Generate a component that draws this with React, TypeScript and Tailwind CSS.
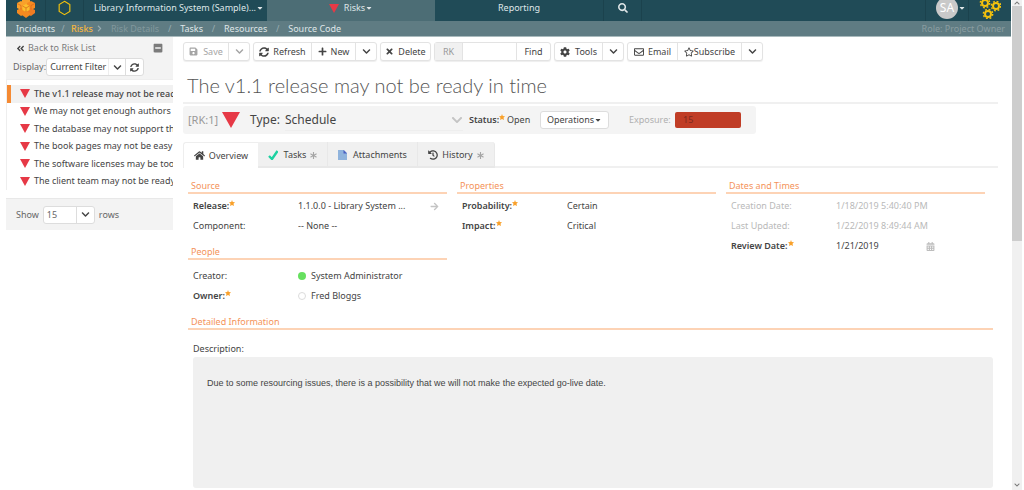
import type { ReactNode } from "react";
import {
  FaAngleDoubleLeft,
  FaArrowRight,
  FaAsterisk,
  FaCalendarAlt,
  FaCaretDown,
  FaChevronDown,
  FaCog,
  FaHistory,
  FaHome,
  FaMinusSquare,
  FaPlus,
  FaRegEnvelope,
  FaRegStar,
  FaSave,
  FaSearch,
  FaSyncAlt,
  FaTimes,
} from "react-icons/fa";

const risks = [
  "The v1.1 release may not be ready",
  "We may not get enough authors",
  "The database may not support the",
  "The book pages may not be easy",
  "The software licenses may be too",
  "The client team may not be ready",
];

function Triangle({ className }: { className: string }) {
  return (
    <svg viewBox="0 0 18 16" className={className} aria-hidden="true">
      <path d="M0 0h18L9 16z" fill="#e63946" />
    </svg>
  );
}

function LogoMark() {
  return (
    <svg viewBox="0 0 20 20" className="h-5 w-5" aria-hidden="true">
      <path d="M10 0l4 2v4l-4 2-4-2V2z" fill="#f9a12b" />
      <path d="M5 3l4 2v5l-4 2-4-2V5z" fill="#f9a12b" />
      <path d="M15 3l4 2v5l-4 2-4-2V5z" fill="#f58a20" />
      <path d="M5 10l4 2v4l-4 2-4-3v-3z" fill="#f58a20" />
      <path d="M15 10l4 2v3l-4 3-4-2v-4z" fill="#f07c22" />
      <path d="M10 13l4 2v2l-4 3-4-3v-2z" fill="#f58a20" />
      <path d="M10 6l3.500 2v4L10 14l-3.500-2V8z" fill="#fbc02d" />
      <path d="M10 10v4M10 10L6.500 8M10 10l3.500-2M5 7.500v4M5 7.500L1 5.500M15 7.500v4M15 7.500l4-2" stroke="#d9641c" strokeWidth="0.700" fill="none" />
    </svg>
  );
}

function GearCluster() {
  return (
    <svg viewBox="0 0 22 22" className="h-[22px] w-[22px]" fill="none" stroke="#f4c20d" aria-hidden="true">
      <g strokeWidth="2">
        <circle cx="6" cy="6" r="3" />
        <circle cx="17" cy="9" r="3" />
        <circle cx="9" cy="17" r="3" />
      </g>
      <g strokeWidth="1.400" strokeDasharray="1.850 1.850">
        <circle cx="6" cy="6" r="4.700" />
        <circle cx="17" cy="9" r="4.700" />
        <circle cx="9" cy="17" r="4.700" />
      </g>
    </svg>
  );
}

function Star() {
  return (
    <svg viewBox="0 0 24 24" className="mb-1 h-[6px] w-[6px] shrink-0 self-start" aria-label="required">
      <path d="M12 0l3 8 9 1-6 6 2 9-8-4-8 4 2-9-6-6 9-1z" fill="#f9a12b" />
    </svg>
  );
}

function ButtonGroup({ children }: { children: ReactNode }) {
  return (
    <div className="flex h-[19px] shrink-0 divide-x divide-[#e3e3e3] rounded-[3px] border border-[#e3e3e3] bg-white shadow-[0_1px_1px_#eeeeee]">
      {children}
    </div>
  );
}

const chevronButton = "flex w-5 items-center justify-center";

function SectionTitle({ children }: { children: ReactNode }) {
  return (
    <h2 className="h-[15px] border-b-2 border-[#fdd3b5] pl-[3px] text-[9px] leading-[14px] text-[#f4935a]">{children}</h2>
  );
}

function FieldRow({ id, label, required, muted, children }: { id: string; label: string; required?: boolean; muted?: boolean; children: ReactNode }) {
  return (
    <div className={muted ? "flex h-5 items-center pl-[5px] text-[#b9b9b9]" : "flex h-5 items-center pl-[5px]"}>
      <label htmlFor={id} className={required ? "flex w-[105px] shrink-0 items-center font-semibold" : "w-[105px] shrink-0"}>
        {label}:{required && <Star />}
      </label>
      {children}
    </div>
  );
}

const bare = "min-w-0 flex-1 appearance-none bg-transparent p-0 outline-none";

export default function App() {
  return (
    <div className="flex h-screen overflow-hidden bg-white pl-[6px] pr-[2px] font-['Noto_Sans',sans-serif] text-[9px] leading-3 text-[#444444]">
      <div className="flex min-w-0 flex-1 flex-col">
        <header className="shrink-0 text-[#dfe6e8]">
          <div className="flex h-[21px] bg-[#204b57]">
            <a href="#home" aria-label="Home" className="flex w-10 items-center justify-center border-r border-[#1b424d] pb-[5px]">
              <LogoMark />
            </a>
            <a href="#workspace" aria-label="Workspace" className="flex w-[38px] items-center justify-center border-r border-[#1b424d] pb-[5px]">
              <svg viewBox="0 0 16 18" className="h-4 w-[15px]" aria-hidden="true">
                <path d="M8 1.500l6 3.700v7.600l-6 3.700-6-3.700V5.200z" fill="none" stroke="#f4c20d" strokeWidth="1.300" />
              </svg>
            </a>
            <button className="flex w-[183px] items-center justify-between whitespace-nowrap pb-[5px] pl-[10px] pr-1">
              Library Information System (Sample)... <FaCaretDown className="h-2 w-2 shrink-0" />
            </button>
            <button className="flex w-[168px] items-center justify-center gap-[5px] bg-[#4c6d75] pb-[5px]">
              <Triangle className="h-[9px] w-[10px]" />
              <span className="flex items-center">
                Risks <FaCaretDown className="h-2 w-2" />
              </span>
            </button>
            <a href="#reporting" className="flex w-[168px] items-center justify-center pb-[5px]">
              Reporting
            </a>
            <button aria-label="Search" className="flex w-[39px] items-center justify-center border-x border-[#1b424d] pb-[5px]">
              <FaSearch className="h-[10px] w-[10px]" />
            </button>
            <div className="flex-1" />
            <button aria-label="Account" className="flex w-[44px] items-center justify-start border-x border-[#1b424d] pb-[5px] pl-[10px]">
              <span className="flex h-[22px] w-[22px] shrink-0 items-center justify-center rounded-full bg-[#c9c9c9] text-[12px] text-white">SA</span>
              <FaCaretDown className="h-2 w-2 shrink-0" />
            </button>
            <a href="#admin" aria-label="Administration" className="flex w-[42px] items-center justify-center pb-[5px]">
              <GearCluster />
            </a>
          </div>
          <nav className="flex h-4 items-center whitespace-nowrap border-b border-[#a9babd] bg-[#5f7c83] px-[10px]">
            <a href="#incidents">Incidents</a>
            <span className="w-4 text-center text-[#9aadb1]">/</span>
            <a href="#risks" className="font-medium text-[#f4b63f]">Risks</a>
            <FaChevronDown className="ml-[3px] h-[7px] w-[7px] -rotate-90 text-[#9aadb1]" />
            <span className="ml-2 text-[#82989d]">Risk Details</span>
            <span className="w-[21px] text-center text-[#9aadb1]">/</span>
            <a href="#tasks">Tasks</a>
            <span className="w-[21px] text-center text-[#9aadb1]">/</span>
            <a href="#resources">Resources</a>
            <span className="w-[21px] text-center text-[#9aadb1]">/</span>
            <a href="#source">Source Code</a>
            <span className="ml-auto -mr-1 text-[#8a9da1]">Role: Project Owner</span>
          </nav>
        </header>

        <div className="flex min-h-0 flex-1">
          <aside className="w-[167px] shrink-0">
            <div className="h-[42px] bg-[#f3f3f3]">
              <div className="flex h-5 items-center px-[10px] pt-[2px] text-[#7b7b7b]">
                <a href="#list" className="flex items-center gap-[3px]">
                  <FaAngleDoubleLeft className="h-[9px] w-[9px] text-[#444444]" />
                  Back to Risk List
                </a>
                <button aria-label="Collapse" className="ml-auto">
                  <FaMinusSquare className="h-[10px] w-[10px]" />
                </button>
              </div>
              <div className="flex h-5 items-center pl-[7px]">
                <label htmlFor="filter" className="text-[#666666]">Display:</label>
                <div className="flex h-[18px] rounded-[3px] border border-[#dddddd] bg-white">
                  <div className="relative flex">
                    <select id="filter" className="w-[78px] appearance-none bg-transparent pl-[3px] outline-none">
                      <option>Current Filter</option>
                    </select>
                    <span className="pointer-events-none absolute inset-y-0 right-0 flex w-[17px] items-center justify-center border-l border-[#eeeeee]">
                      <FaChevronDown className="h-[9px] w-[9px]" />
                    </span>
                  </div>
                  <button aria-label="Reload list" className="flex w-[18px] items-center justify-center border-l border-[#dddddd]">
                    <FaSyncAlt className="h-[9px] w-[9px]" />
                  </button>
                </div>
              </div>
            </div>
            <div className="border-l border-t border-[#eeeeee] pt-[5px]">
              <ul className="grid h-[105px] auto-rows-fr">
                {risks.map((risk, i) => (
                  <li key={risk} className={i === 0 ? "flex min-w-0 border-l-4 border-[#f58a33] bg-[#f1f1f1] font-medium" : "flex min-w-0 border-l-4 border-transparent"}>
                    <a href="#risk" className="flex min-w-0 flex-1 items-center gap-1 overflow-hidden whitespace-nowrap pl-[9px]">
                      <Triangle className="h-[9px] w-[10px] shrink-0" />
                      {risk}
                    </a>
                  </li>
                ))}
              </ul>
            </div>
            <div className="mt-2 flex h-8 items-center gap-1 border-t border-[#e8e8e8] bg-[#f3f3f3] pl-[10px] text-[#666666]">
              <label htmlFor="rows">Show</label>
              <div className="relative flex h-[18px] rounded-[3px] border border-[#dddddd] bg-white">
                <select id="rows" className="w-[50px] appearance-none bg-transparent pl-[3px] outline-none">
                  <option>15</option>
                </select>
                <span className="pointer-events-none absolute inset-y-0 right-0 flex w-[18px] items-center justify-center border-l border-[#dddddd] text-[#444444]">
                  <FaChevronDown className="h-[9px] w-[9px]" />
                </span>
              </div>
              rows
            </div>
          </aside>

          <main className="min-w-0 flex-1 pl-[10px] pr-[13px] pt-[5px]">
            <div className="flex gap-[3px]" role="toolbar">
              <ButtonGroup>
                <button className="flex w-[45px] items-center justify-center gap-[5px] text-[#a5a5a5]">
                  <FaSave className="h-[9px] w-[9px]" />
                  Save
                </button>
                <button aria-label="Save options" className={chevronButton}>
                  <FaChevronDown className="h-[9px] w-[9px] text-[#a5a5a5]" />
                </button>
              </ButtonGroup>
              <ButtonGroup>
                <button className="flex w-[58px] items-center justify-center gap-1">
                  <FaSyncAlt className="h-[10px] w-[10px]" />
                  Refresh
                </button>
                <button className="flex w-[44px] items-center justify-center gap-1">
                  <FaPlus className="h-[9px] w-[9px]" />
                  New
                </button>
                <button aria-label="New options" className={chevronButton}>
                  <FaChevronDown className="h-[9px] w-[9px]" />
                </button>
              </ButtonGroup>
              <ButtonGroup>
                <button className="flex w-[49px] items-center justify-center gap-1">
                  <FaTimes className="h-[9px] w-[9px]" />
                  Delete
                </button>
              </ButtonGroup>
              <ButtonGroup>
                <label htmlFor="find" className="flex w-7 items-center justify-center bg-[#f1f1f1] text-[#999999]">RK</label>
                <input id="find" className="w-[54px] bg-transparent px-1 outline-none" />
                <button className="w-[33px]">Find</button>
              </ButtonGroup>
              <ButtonGroup>
                <button className="flex w-[48px] items-center justify-center gap-[5px]">
                  <FaCog className="h-[10px] w-[10px]" />
                  Tools
                </button>
                <button aria-label="Tool options" className={chevronButton}>
                  <FaChevronDown className="h-[9px] w-[9px]" />
                </button>
              </ButtonGroup>
              <ButtonGroup>
                <button className="flex w-[50px] items-center justify-center gap-1">
                  <FaRegEnvelope className="h-[10px] w-[10px]" />
                  Email
                </button>
                <button className="flex w-[64px] items-center justify-center">
                  <FaRegStar className="h-[10px] w-[10px]" />
                  Subscribe
                </button>
                <button aria-label="Subscription options" className={chevronButton}>
                  <FaChevronDown className="h-[9px] w-[9px]" />
                </button>
              </ButtonGroup>
            </div>

            <h1 className="mt-3 h-[31px] border-b-2 border-[#f0f0f0] pl-1 font-['Lato',sans-serif] text-[20px] font-light leading-6 text-[#555555] [font-variant-ligatures:none]">
              The v1.1 release may not be ready in time
            </h1>

            <div className="mt-[2px] flex h-7 w-[573px] items-center rounded-[3px] bg-[#f4f4f4] pl-[5px]">
              <span className="mr-[2px] w-8 text-[11px] text-[#999999]">[RK:1]</span>
              <Triangle className="h-4 w-[18px]" />
              <label htmlFor="type" className="ml-[10px] w-[35px] text-[12px]">Type:</label>
              <div className="flex h-[22px] w-[178px] items-center border-b border-[#eeeeee]">
                <select id="type" className="min-w-0 flex-1 appearance-none bg-transparent text-[12px] outline-none">
                  <option>Schedule</option>
                </select>
                <FaChevronDown className="h-3 w-3 text-[#c4c4c4]" />
              </div>
              <span className="ml-[6px] flex w-[38px] items-center font-semibold">
                Status:
                <Star />
              </span>
              <span className="w-[33px]">Open</span>
              <button className="flex h-[18px] w-[69px] items-center justify-center rounded-[3px] border border-[#dddddd] bg-white">
                Operations <FaCaretDown className="h-2 w-2" />
              </button>
              <span className="ml-5 w-[46px] text-[#b0b0b0]">Exposure:</span>
              <span className="flex h-4 w-[66px] items-center rounded-[2px] bg-[#c03d26] pl-2 text-[#7c2a1e]">15</span>
            </div>

            <div className="mt-2 flex h-[26px]" role="tablist">
              <button role="tab" aria-selected="true" className="flex w-[75px] items-center justify-center gap-1 rounded-tl-[3px] border-l border-t border-[#eeeeee]">
                <FaHome className="h-[11px] w-[11px]" />
                Overview
              </button>
              <button role="tab" aria-selected="false" className="flex w-[70px] items-center justify-center gap-1 border-b-2 border-r border-[#e8e8e8] bg-[#f0f0f0] pt-[2px]">
                <svg viewBox="0 0 10 10" className="mr-[2px] h-[10px] w-[10px]" aria-hidden="true">
                  <path d="M1 6l3 3L9.500 1" fill="none" stroke="#1dd1a1" strokeWidth="2.400" />
                </svg>
                Tasks
                <FaAsterisk className="h-[7px] w-[7px] text-[#a5a5a5]" />
              </button>
              <button role="tab" aria-selected="false" className="flex w-[90px] items-center justify-center gap-[6px] border-b-2 border-r border-[#e8e8e8] bg-[#f0f0f0] pt-[2px]">
                <svg viewBox="0 0 9 10" className="h-[10px] w-[9px]" aria-hidden="true">
                  <path d="M0 0h6l3 3v7H0z" fill="#8fb3dc" />
                  <path d="M5.500 0L9 3.500H5.500z" fill="#4a5fc1" />
                </svg>
                Attachments
              </button>
              <button role="tab" aria-selected="false" className="flex w-[77px] items-center justify-center gap-1 rounded-tr-[3px] border-b-2 border-r border-[#e8e8e8] bg-[#f0f0f0] pt-[2px]">
                <FaHistory className="h-[10px] w-[10px]" />
                History
                <FaAsterisk className="h-[7px] w-[7px] text-[#a5a5a5]" />
              </button>
              <div className="flex-1 border-b-2 border-[#f0f0f0]" />
            </div>

            <div className="px-[5px]">
              <div className="grid grid-cols-3 gap-[10px] pr-2 pt-[11px]">
                <div>
                  <section>
                    <SectionTitle>Source</SectionTitle>
                    <div className="pt-[2px]">
                      <FieldRow id="release" label="Release" required>
                        <select id="release" className={bare}>
                          <option>1.1.0.0 - Library System ...</option>
                        </select>
                        <a href="#release" aria-label="Open release" className="mr-2">
                          <FaArrowRight className="h-[9px] w-[9px] text-[#c4c4c4]" />
                        </a>
                      </FieldRow>
                      <FieldRow id="component" label="Component">
                        <select id="component" className={bare}>
                          <option>-- None --</option>
                        </select>
                      </FieldRow>
                    </div>
                  </section>
                  <section className="pt-[9px]">
                    <SectionTitle>People</SectionTitle>
                    <div className="pt-[6px]">
                      <FieldRow id="creator" label="Creator">
                        <span className="mr-[5px] h-2 w-2 rounded-full bg-[#66e05f]" />
                        <output id="creator">System Administrator</output>
                      </FieldRow>
                      <FieldRow id="owner" label="Owner" required>
                        <span className="mr-[5px] h-2 w-2 rounded-full border border-[#dcdcdc]" />
                        <select id="owner" className={bare}>
                          <option>Fred Bloggs</option>
                        </select>
                      </FieldRow>
                    </div>
                  </section>
                </div>
                <section>
                  <SectionTitle>Properties</SectionTitle>
                  <div className="pt-[2px]">
                    <FieldRow id="probability" label="Probability" required>
                      <select id="probability" className={bare}>
                        <option>Certain</option>
                      </select>
                    </FieldRow>
                    <FieldRow id="impact" label="Impact" required>
                      <select id="impact" className={bare}>
                        <option>Critical</option>
                      </select>
                    </FieldRow>
                  </div>
                </section>
                <section>
                  <SectionTitle>Dates and Times</SectionTitle>
                  <div className="pt-[2px]">
                    <FieldRow id="created" label="Creation Date" muted>
                      <output id="created">1/18/2019 5:40:40 PM</output>
                    </FieldRow>
                    <FieldRow id="updated" label="Last Updated" muted>
                      <output id="updated">1/22/2019 8:49:44 AM</output>
                    </FieldRow>
                    <FieldRow id="review" label="Review Date" required>
                      <input id="review" defaultValue="1/21/2019" className={bare} />
                      <button aria-label="Pick a date" className="mr-[50px]">
                        <FaCalendarAlt className="h-[9px] w-[9px] text-[#bdbdbd]" />
                      </button>
                    </FieldRow>
                  </div>
                </section>
              </div>

              <section className="pt-[9px]">
                <SectionTitle>Detailed Information</SectionTitle>
                <div className="pl-[5px] pt-[13px]">
                  <label htmlFor="description" className="block h-[14px]">Description:</label>
                  <textarea
                    id="description"
                    rows={9}
                    className="block h-[131px] w-full resize-none rounded-[3px] bg-[#f0f0f0] px-[14px] pt-5 font-['Liberation_Sans',sans-serif] text-[9px] leading-3 outline-none"
                    defaultValue="Due to some resourcing issues, there is a possibility that we will not make the expected go-live date."
                  />
                </div>
              </section>
            </div>
          </main>
        </div>
      </div>

      <div className="flex w-[11px] shrink-0 flex-col items-center border-l border-white bg-[#f0f0f0] text-[#777777]" aria-hidden="true">
        <FaChevronDown className="h-[6px] w-[6px] rotate-180" />
        <div className="h-[235px] w-full bg-[#cdcdcd]" />
        <FaChevronDown className="mb-[2px] mt-auto h-[6px] w-[6px]" />
      </div>
    </div>
  );
}
